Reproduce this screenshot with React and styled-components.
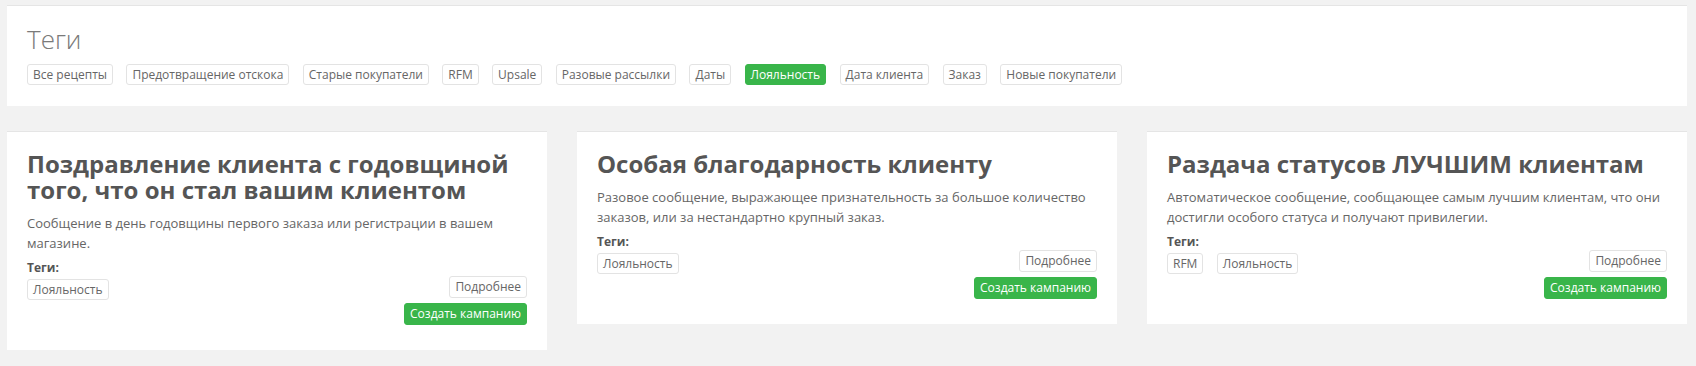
import styled, { createGlobalStyle } from 'styled-components';

const allTags = [
  'Все рецепты',
  'Предотвращение отскока',
  'Старые покупатели',
  'RFM',
  'Upsale',
  'Разовые рассылки',
  'Даты',
  'Лояльность',
  'Дата клиента',
  'Заказ',
  'Новые покупатели',
];

const recipes = [
  {
    title: 'Поздравление клиента с годовщиной того, что он стал вашим клиентом',
    description: 'Сообщение в день годовщины первого заказа или регистрации в вашем магазине.',
    tags: ['Лояльность'],
  },
  {
    title: 'Особая благодарность клиенту',
    description: 'Разовое сообщение, выражающее признательность за большое количество заказов, или за нестандартно крупный заказ.',
    tags: ['Лояльность'],
  },
  {
    title: 'Раздача статусов ЛУЧШИМ клиентам',
    description: 'Автоматическое сообщение, сообщающее самым лучшим клиентам, что они достигли особого статуса и получают привилегии.',
    tags: ['RFM', 'Лояльность'],
  },
];

function App() {
  return (
    <>
      <GlobalStyle />
      <Page>
        <TagsPanel>
          <PanelTitle>Теги</PanelTitle>
          <TagList>
            {allTags.map((tag) => (
              <Tag key={tag} $active={tag === 'Лояльность'}>
                {tag}
              </Tag>
            ))}
          </TagList>
        </TagsPanel>
        <Cards>
          {recipes.map((recipe) => (
            <Card key={recipe.title}>
              <CardTitle>{recipe.title}</CardTitle>
              <Description>{recipe.description}</Description>
              <Footer>
                <TagsBlock>
                  <Label>Теги:</Label>
                  <TagList>
                    {recipe.tags.map((tag) => (
                      <Tag key={tag}>{tag}</Tag>
                    ))}
                  </TagList>
                </TagsBlock>
                <Actions>
                  <Button>Подробнее</Button>
                  <Button $primary>Создать кампанию</Button>
                </Actions>
              </Footer>
            </Card>
          ))}
        </Cards>
      </Page>
    </>
  );
}

const GlobalStyle = createGlobalStyle`
  html, body {
    margin: 0;
    background: #f2f2f2;
    font-family: "Open Sans", "Liberation Sans", sans-serif;
    color: #555;
  }
`;

const Page = styled.div`
  padding: 5px 9px 16px 7px;
`;

const TagsPanel = styled.section`
  background: #fff;
  border-top: 1px solid #e5e5e5;
  padding: 19px 20px 21px;
`;

const PanelTitle = styled.h2`
  font-size: 26px;
  font-weight: 300;
  line-height: 1.1;
  color: #7a7a7a;
  margin: 0 0 10px;
`;

const TagList = styled.div`
  display: flex;
  flex-wrap: wrap;
  gap: 13.4px;
`;

const Tag = styled.span`
  display: inline-block;
  height: 21px;
  box-sizing: border-box;
  padding: 0 5px;
  font-size: 12px;
  line-height: 19px;
  border: 1px solid ${(p) => (p.$active ? '#39b54a' : '#e3e3e3')};
  border-radius: 3px;
  background: ${(p) => (p.$active ? '#39b54a' : '#fff')};
  color: ${(p) => (p.$active ? '#fff' : '#666')};
  white-space: nowrap;
`;

const Cards = styled.div`
  display: grid;
  grid-template-columns: repeat(3, 540px);
  gap: 30px;
  align-items: start;
  margin-top: 25px;
`;

const Card = styled.article`
  background: #fff;
  border-top: 1px solid #e5e5e5;
  padding: 19px 20px 25px;
`;

const CardTitle = styled.h3`
  font-size: 24px;
  font-weight: 700;
  line-height: 1.1;
  color: #555;
  margin: 0 0 10px;
`;

const Description = styled.p`
  font-size: 13px;
  line-height: 20px;
  color: #666;
  margin: 0;
`;

const Footer = styled.div`
  display: flex;
  justify-content: space-between;
  align-items: flex-start;
  margin-top: 6px;
`;

const TagsBlock = styled.div`
  display: flex;
  flex-direction: column;
  gap: 3px;
`;

const Label = styled.div`
  font-size: 12px;
  font-weight: 700;
  line-height: 17px;
  color: #555;
`;

const Actions = styled.div`
  display: flex;
  flex-direction: column;
  align-items: flex-end;
  gap: 5px;
  margin-top: 17px;
`;

const Button = styled.button`
  height: 22px;
  box-sizing: border-box;
  padding: 0 5px;
  font-family: inherit;
  font-size: 12px;
  line-height: 20px;
  border: 1px solid ${(p) => (p.$primary ? '#39b54a' : '#e3e3e3')};
  border-radius: 3px;
  background: ${(p) => (p.$primary ? '#39b54a' : '#fff')};
  color: ${(p) => (p.$primary ? '#fff' : '#666')};
  cursor: pointer;
`;

export default App;
